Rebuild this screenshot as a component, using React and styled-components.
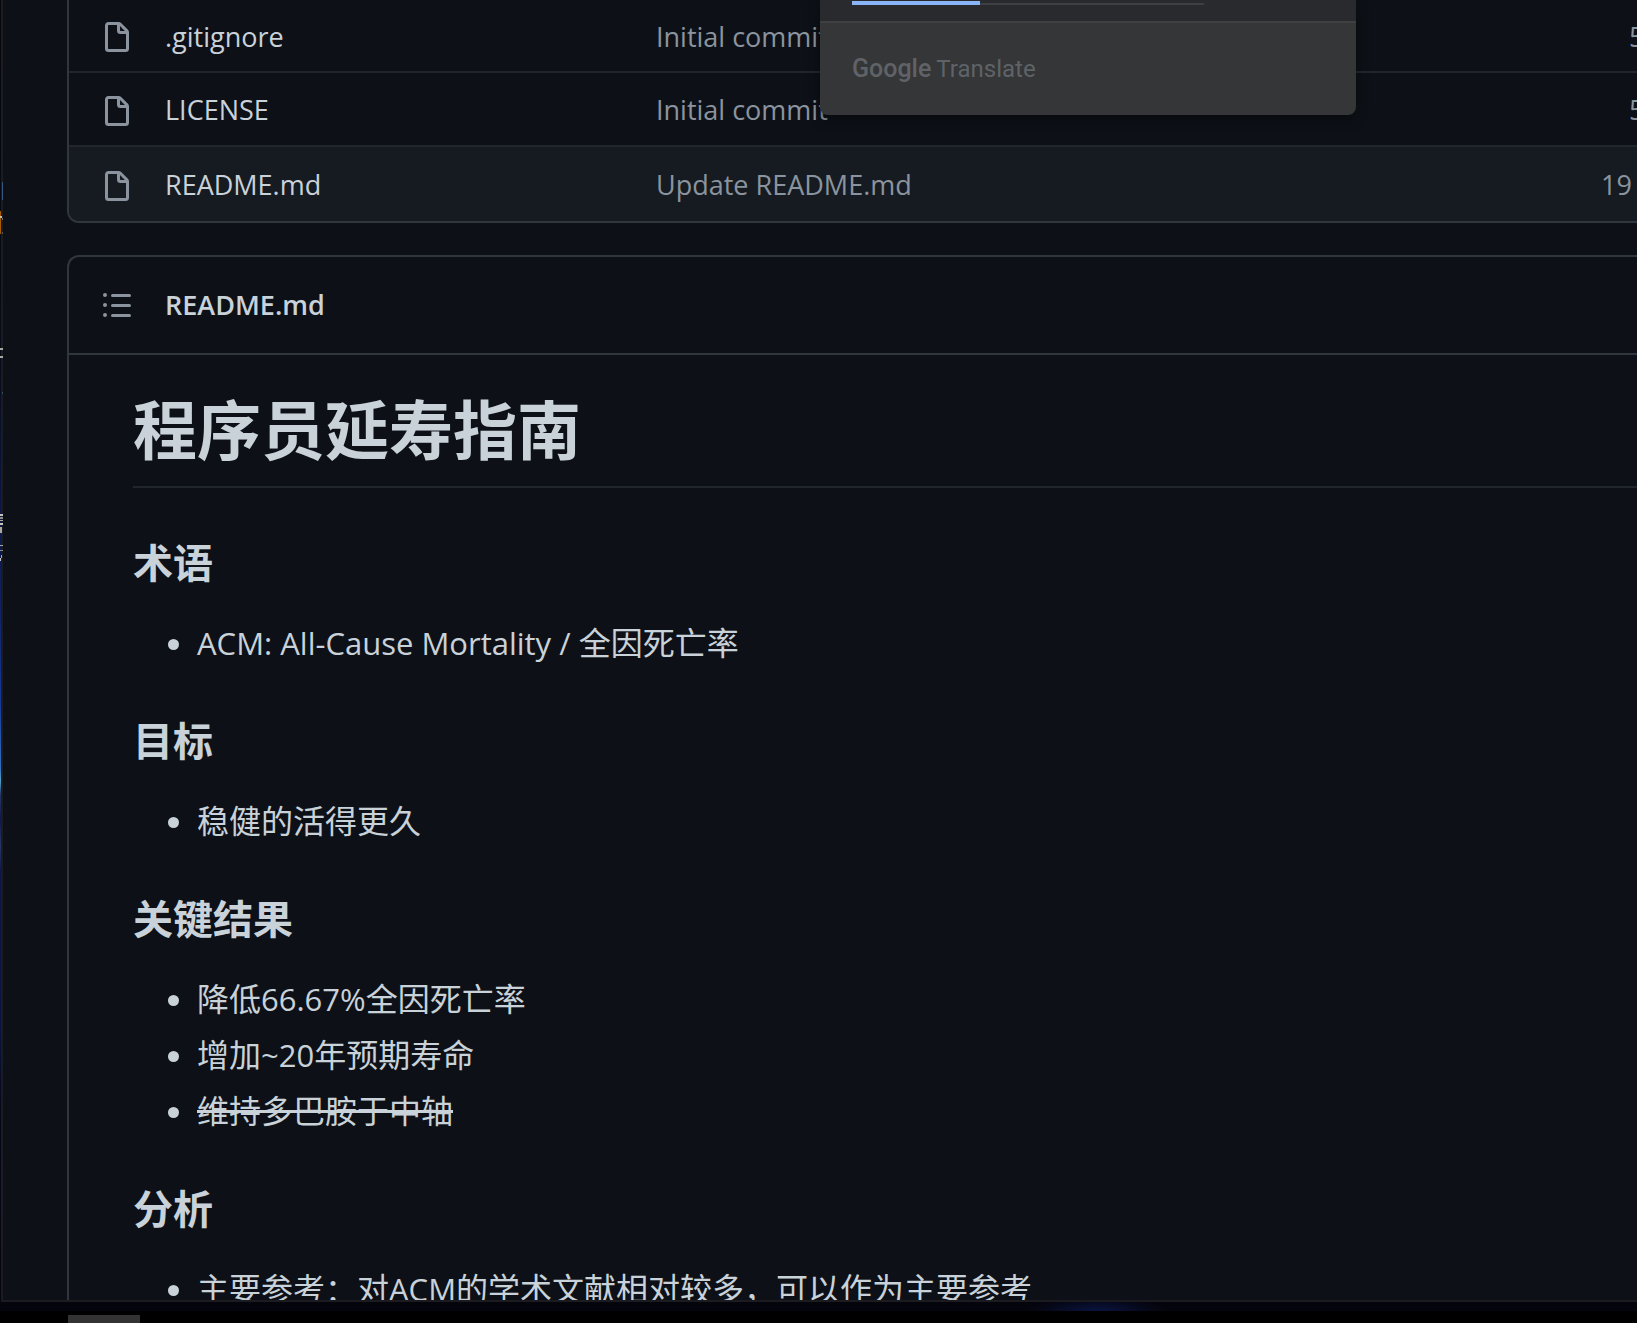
import React from "react";
import styled, { createGlobalStyle } from "styled-components";

const GlobalStyle = createGlobalStyle`
  * { box-sizing: border-box; }
  html, body { margin: 0; padding: 0; background: #000; }
  body {
    font-family: "Open Sans", "Noto Sans CJK SC", sans-serif;
    color: #c9d1d9;
  }
`;

const Desktop = styled.div`
  position: relative;
  display: flex;
  flex-direction: column;
  height: 100vh;
  overflow: hidden;
`;

const Stage = styled.div`
  display: flex;
  flex: 1;
  min-height: 0;
`;

const WallpaperEdge = styled.div`
  flex: none;
  width: 1px;
  background: linear-gradient(
    to bottom,
    #05070c 0%,
    #070a18 27%,
    #0b1540 38%,
    #0e2060 46%,
    #15389a 54%,
    #2f6fc0 59%,
    #4fa3c8 60%,
    #27376b 61%,
    #10184a 63%,
    #27376b 65%,
    #0d1747 67%,
    #0a1440 79%,
    #06071c 85%,
    #05050f 100%
  );
`;

const Fragments = styled.svg`
  position: absolute;
  left: 0;
  top: 0;
`;

const Browser = styled.div`
  flex: 1;
  min-width: 0;
  overflow: hidden;
  padding-left: 64px;
  background: #0d1117;
  border: solid #1c1c20;
  border-width: 0 0 2px 2px;
`;

const FileBox = styled.section`
  border: solid #30363d;
  border-width: 0 0 2px 2px;
  border-radius: 0 0 0 12px;
  overflow: hidden;
`;

const FileTable = styled.table`
  width: 100%;
  table-layout: fixed;
  border-spacing: 0;
  font-size: 27px;
  line-height: 42px;
`;

const IconCol = styled.col`
  width: 96px;
`;
const NameCol = styled.col`
  width: 491px;
`;
const AgeCol = styled.col`
  width: 36px;
`;

const FileRow = styled.tr`
  background: ${(p) => (p.$active ? "#161b22" : "transparent")};
  & > td {
    height: ${(p) => p.$height}px;
    border-top: ${(p) => (p.$first ? "0" : "2px solid #21262d")};
  }
`;

const Cell = styled.td`
  padding: 2px 0 0;
  overflow: hidden;
  white-space: nowrap;
  color: #8b949e;
`;

const IconCell = styled(Cell)`
  padding: 5px 0 0 32px;
`;

const AgeCell = styled(Cell)`
  padding-left: ${(p) => (p.$short ? 28 : 0)}px;
  text-overflow: clip;
`;

const Link = styled.a`
  color: ${(p) => (p.$muted ? "#8b949e" : "#c9d1d9")};
  text-decoration: none;
`;

const Octicon = styled.svg`
  display: block;
  width: 32px;
  height: 32px;
  fill: #8b949e;
`;

const ReadmeBox = styled.section`
  margin-top: 32px;
  border: solid #30363d;
  border-width: 2px 0 0 2px;
  border-radius: 12px 0 0 0;
`;

const ReadmeHeader = styled.header`
  display: flex;
  align-items: center;
  gap: 32px;
  height: 98px;
  padding-left: 32px;
  border-bottom: 2px solid #30363d;
`;

const OutlineButton = styled.button`
  padding: 0;
  border: 0;
  background: none;
`;

const ReadmeTitle = styled.a`
  font-size: 27px;
  line-height: 42px;
  font-weight: 600;
  color: #c9d1d9;
  text-decoration: none;
`;

const Article = styled.article`
  padding: 35px 0 64px 64px;
`;

const Title = styled.h1`
  margin: 0 0 50px;
  padding-bottom: 16px;
  border-bottom: 2px solid #21262d;
  font-size: 64px;
  line-height: 80px;
  font-weight: 700;
`;

const Heading = styled.h3`
  margin: 49px 0 31px;
  font-size: 40px;
  line-height: 50px;
  font-weight: 700;
`;

const List = styled.ul`
  margin: 0;
  padding-left: 64px;
  font-size: 32px;
  line-height: 48px;
`;

const Item = styled.li`
  white-space: nowrap;
  & + & {
    margin-top: 8px;
  }
`;

const Latin = styled.span`
  font-size: 31px;
  line-height: 32px;
`;

const Strike = styled.del`
  text-decoration: line-through;
  text-decoration-thickness: 3px;
`;

const WallpaperBottom = styled.div`
  flex: none;
  height: 9px;
  background: radial-gradient(
      70px 14px at 67% 100%,
      #0a1440 0%,
      rgba(10, 20, 64, 0) 100%
    ),
    #04040c;
`;

const Taskbar = styled.div`
  flex: none;
  display: flex;
  align-items: flex-end;
  height: 12px;
  padding-left: 68px;
  background: #000;
`;

const TaskbarItem = styled.div`
  width: 72px;
  height: 8px;
  background: #333333;
`;

const Popup = styled.aside`
  position: absolute;
  top: 0;
  left: 820px;
  width: 536px;
  border-radius: 0 0 8px 8px;
  overflow: hidden;
  background: #353637;
  box-shadow: 0 4px 12px rgba(0, 0, 0, 0.45);
`;

const PopupTabs = styled.div`
  display: flex;
  align-items: flex-start;
  height: 23px;
  padding: 1px 32px 0;
  background: #292a2d;
  border-bottom: 2px solid #3f4042;
`;

const ActiveTab = styled.div`
  width: 128px;
  height: 4px;
  background: #8ab4f8;
`;

const TabTrack = styled.div`
  width: 224px;
  height: 2px;
  margin-top: 2px;
  background: #3c4043;
`;

const PopupFooter = styled.footer`
  display: flex;
  align-items: center;
  gap: 5px;
  height: 92px;
  padding: 0 32px;
  color: #5f6368;
  font-family: Roboto, sans-serif;
  font-size: 24px;
  line-height: 32px;
`;

const Brand = styled.span`
  font-size: 25px;
  font-weight: 500;
`;

const FileIcon = () => (
  <Octicon viewBox="0 0 16 16" aria-hidden="true">
    <path
      fillRule="evenodd"
      d="M3.75 1.5a.25.25 0 00-.25.25v11.5c0 .138.112.25.25.25h8.5a.25.25 0 00.25-.25V6H9.75A1.75 1.75 0 018 4.25V1.5H3.75zm5.75.56v2.19c0 .138.112.25.25.25h2.19L9.5 2.06zM2 1.75C2 .784 2.784 0 3.75 0h5.086c.464 0 .909.184 1.237.513l3.414 3.414c.329.328.513.773.513 1.237v8.086A1.75 1.75 0 0112.25 15h-8.5A1.75 1.75 0 012 13.25V1.75z"
    />
  </Octicon>
);

const ListIcon = () => (
  <Octicon viewBox="0 0 16 16" aria-hidden="true">
    <path
      fillRule="evenodd"
      d="M2 4a1 1 0 100-2 1 1 0 000 2zm3.75-1.5a.75.75 0 000 1.5h8.5a.75.75 0 000-1.5h-8.5zm0 5a.75.75 0 000 1.5h8.5a.75.75 0 000-1.5h-8.5zm0 5a.75.75 0 000 1.5h8.5a.75.75 0 000-1.5h-8.5zM3 8a1 1 0 11-2 0 1 1 0 012 0zm-1 6a1 1 0 100-2 1 1 0 000 2z"
    />
  </Octicon>
);

const files = [
  { name: ".gitignore", commit: "Initial commit", age: "5", height: 71 },
  { name: "LICENSE", commit: "Initial commit", age: "5", height: 74 },
  { name: "README.md", commit: "Update README.md", age: "19", height: 76, active: true },
];

export default function App() {
  return (
    <Desktop>
      <GlobalStyle />
      <Stage>
        <WallpaperEdge />
        <Browser>
          <FileBox>
            <FileTable>
              <colgroup>
                <IconCol />
                <NameCol />
                <col />
                <AgeCol />
              </colgroup>
              <tbody>
                {files.map((f, i) => (
                  <FileRow key={f.name} $first={i === 0} $active={f.active} $height={f.height}>
                    <IconCell>
                      <FileIcon />
                    </IconCell>
                    <Cell>
                      <Link href="#">{f.name}</Link>
                    </Cell>
                    <Cell>
                      <Link href="#" $muted>
                        {f.commit}
                      </Link>
                    </Cell>
                    <AgeCell $short={f.age.length === 1}>{f.age}</AgeCell>
                  </FileRow>
                ))}
              </tbody>
            </FileTable>
          </FileBox>

          <ReadmeBox>
            <ReadmeHeader>
              <OutlineButton type="button" aria-label="README.md">
                <ListIcon />
              </OutlineButton>
              <ReadmeTitle href="#">README.md</ReadmeTitle>
            </ReadmeHeader>
            <Article lang="zh-CN">
              <Title>程序员延寿指南</Title>
              <Heading>术语</Heading>
              <List>
                <Item>
                  <Latin>ACM: All-Cause Mortality / </Latin>全因死亡率
                </Item>
              </List>
              <Heading>目标</Heading>
              <List>
                <Item>稳健的活得更久</Item>
              </List>
              <Heading>关键结果</Heading>
              <List>
                <Item>
                  降低<Latin>66.67%</Latin>全因死亡率
                </Item>
                <Item>
                  增加<Latin>~20</Latin>年预期寿命
                </Item>
                <Item>
                  <Strike>维持多巴胺于中轴</Strike>
                </Item>
              </List>
              <Heading>分析</Heading>
              <List>
                <Item>
                  主要参考：对<Latin>ACM</Latin>的学术文献相对较多，可以作为主要参考
                </Item>
              </List>
            </Article>
          </ReadmeBox>
        </Browser>
      </Stage>
      <WallpaperBottom />
      <Taskbar>
        <TaskbarItem />
      </Taskbar>

      <Fragments width="3" height="600" aria-hidden="true" shapeRendering="crispEdges">
        <rect x="2" y="182" width="1" height="18" fill="#35597c" />
        <rect x="0" y="211" width="1" height="23" fill="#a85e00" />
        <rect x="0" y="216" width="2" height="2" fill="#c9bda8" />
        <rect x="2" y="218" width="1" height="2" fill="#6f7478" />
        <rect x="2" y="232" width="1" height="2" fill="#4d5a66" />
        <rect x="0" y="348" width="3" height="2" fill="#a9a9a4" />
        <rect x="0" y="356" width="3" height="2" fill="#a9a9a4" />
        <rect x="2" y="392" width="1" height="2" fill="#2f4a55" />
        <rect x="0" y="514" width="3" height="2" fill="#c4c4bd" />
        <rect x="0" y="517" width="3" height="2" fill="#8b8b86" />
        <rect x="0" y="520" width="3" height="1" fill="#a9a9a4" />
        <rect x="0" y="523" width="3" height="2" fill="#c4c4bd" />
        <rect x="0" y="527" width="2" height="6" fill="#a9a9a4" />
        <rect x="0" y="545" width="3" height="1" fill="#a9a9a4" />
        <rect x="0" y="550" width="3" height="1" fill="#8b8b86" />
        <rect x="1" y="555" width="1" height="3" fill="#a9a9a4" />
        <rect x="0" y="558" width="1" height="3" fill="#c4c4bd" />
      </Fragments>

      <Popup>
        <PopupTabs>
          <ActiveTab />
          <TabTrack />
        </PopupTabs>
        <PopupFooter>
          <Brand>Google</Brand>
          <span>Translate</span>
        </PopupFooter>
      </Popup>
    </Desktop>
  );
}
